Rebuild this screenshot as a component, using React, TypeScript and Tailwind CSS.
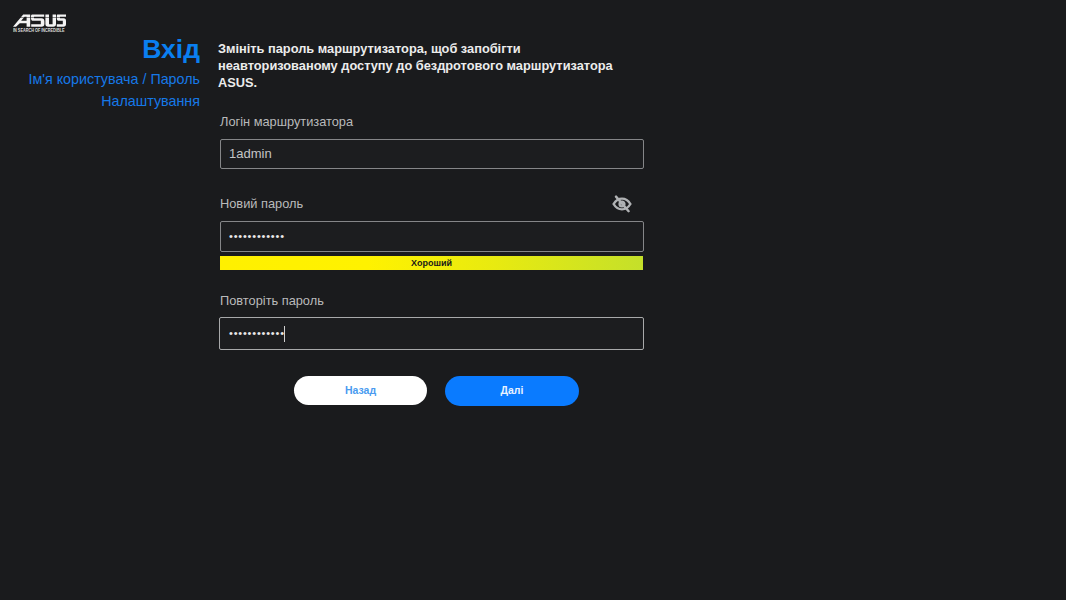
import React from "react";

function AsusLogo() {
  return (
    <svg width="53" height="13" viewBox="0 0 53 13" fill="#f4f4f4" className="block">
      <path fillRule="evenodd" d="M10.2 0.4 H17.2 V12.8 H13.6 V9.2 H6.8 L3 12.8 H0 Z M13.6 2.8 H11.6 L8.1 6.7 H13.6 Z" />
      <path d="M19 0.4 H31.2 V2.8 H21 V4.2 H28.4 C30.6 4.2 31.4 5.4 31.4 7.6 V9.8 C31.4 11.8 30.6 12.8 28.4 12.8 H18.2 V10.2 H27.8 V6.8 H20.2 C18.8 6.8 18 5.8 18 4.2 V2.4 C18 1.2 18.4 0.4 19 0.4 Z" />
      <path d="M32.4 0.4 H36 V10.2 H39.6 V0.4 H43 V10 C43 11.8 42.2 12.8 40.2 12.8 H35.2 C33.4 12.8 32.4 11.8 32.4 10 Z" />
      <path d="M44.6 0.4 H53 V2.8 H47 V4.2 H50.6 C52.4 4.2 53 5.2 53 7 V10 C53 11.8 52.2 12.8 50.4 12.8 H43.8 V10.2 H49.8 V6.8 H46 C44.6 6.8 43.8 6 43.8 4.4 V2.2 C43.8 1 44 0.4 44.6 0.4 Z" />
      <rect x="0" y="3.4" width="53" height="0.5" fill="#1a1b1d" />
    </svg>
  );
}

function EyeOff() {
  return (
    <svg width="20" height="18" viewBox="0 0 20 18" fill="none" stroke="#b0b2b4" strokeWidth="2.4" strokeLinecap="round">
      <path d="M1.6 9 C4 5 6.8 3.6 10 3.6 C13.2 3.6 16 5 18.4 9 C16 13 13.2 14.4 10 14.4 C6.8 14.4 4 13 1.6 9 Z" />
      <circle cx="10" cy="9" r="2.4" />
      <path d="M4 1.6 L16.6 16.2" />
    </svg>
  );
}

export default function App() {
  return (
    <div className="flex h-[600px] w-[1066px] overflow-hidden bg-[#1a1b1d] font-['Liberation_Sans',sans-serif]">
      <aside className="flex w-[200px] shrink-0 flex-col">
        <div className="pl-[13px] pt-[14px]">
          <AsusLogo />
          <div className="mt-[1px] origin-left scale-x-[0.76] whitespace-nowrap text-[5px] font-bold leading-[5px] text-[#dcdcdc]">
            IN SEARCH OF INCREDIBLE
          </div>
        </div>
        <h1 className="mt-[-1px] text-right text-[26.5px] font-bold leading-[34px] text-[#0a7ff0]">Вхід</h1>
        <div className="mt-[2px] text-right text-[14.3px] leading-[22px] text-[#1679e8]">
          <div>Ім'я користувача / Пароль</div>
          <div>Налаштування</div>
        </div>
      </aside>
      <main className="ml-[18px] w-[427px] pt-[40px]">
        <p className="w-[420px] text-[12.8px] font-bold leading-[17px] text-[#ececec]">
          Змініть пароль маршрутизатора, щоб запобігти неавторизованому доступу до бездротового маршрутизатора ASUS.
        </p>
        <div className="ml-[2px] w-[424px]">
          <div className="mt-[22px] text-[12.8px] leading-[18px] text-[#b9babb]">Логін маршрутизатора</div>
          <div className="mt-[8px] flex h-[30px] items-center rounded-[2px] border border-[#858688] bg-[#1c1d1f] pl-[8px] text-[13px] text-[#c4c5c6]">
            1admin
          </div>
          <div className="mt-[26px] flex h-[18px] items-center justify-between text-[12.8px] leading-[18px] text-[#b9babb]">
            <span>Новий пароль</span>
            <span className="mr-[12px]"><EyeOff /></span>
          </div>
          <div className="mt-[8px] flex h-[31px] items-center rounded-[2px] border border-[#858688] bg-[#1c1d1f] pl-[8px] text-[11px] tracking-[0.8px] text-[#e8e8e8]">
            ••••••••••••
          </div>
          <div className="mt-[4px] flex h-[14px] w-[423px] items-center justify-center bg-[linear-gradient(90deg,#fff000_0%,#fff200_35%,#e8ea10_65%,#c4e02a_100%)] text-[9px] font-bold leading-none text-[#1a1a1a]">
            Хороший
          </div>
          <div className="mt-[22px] text-[12.8px] leading-[18px] text-[#b9babb]">Повторіть пароль</div>
          <div className="mt-[7px] ml-[-1px] flex h-[33px] w-[425px] items-center rounded-[2px] border border-[#a8a9aa] bg-[#1c1d1f] pl-[9px] text-[11px] tracking-[0.8px] text-[#e8e8e8]">
            ••••••••••••
            <span className="ml-[-1px] h-[16px] w-px bg-[#d0d0d0]" />
          </div>
        </div>
        <div className="ml-[76px] mt-[26px] flex items-start gap-[18px] text-[10.5px] font-bold">
          <button className="h-[29px] w-[133px] rounded-full bg-white text-[#4a9bf0]">Назад</button>
          <button className="h-[30px] w-[134px] rounded-full bg-[#0a7bff] text-[#e8f2ff]">Далі</button>
        </div>
      </main>
    </div>
  );
}
